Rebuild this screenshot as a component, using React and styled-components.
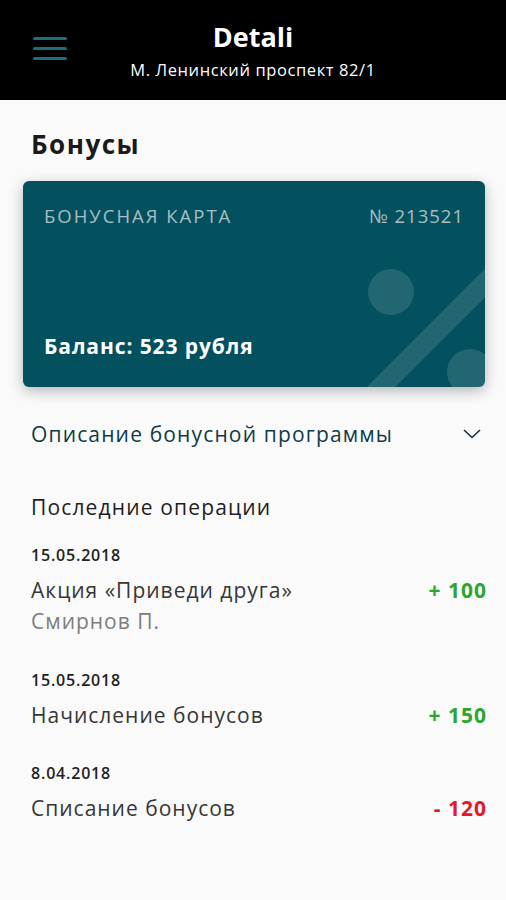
import React from "react";
import styled, { createGlobalStyle } from "styled-components";

const Global = createGlobalStyle`
  html, body { margin: 0; padding: 0; background: #fafafa; }
  body { font-family: "Open Sans", "Liberation Sans", sans-serif; -webkit-font-smoothing: antialiased; }
  * { box-sizing: border-box; }
`;

const Page = styled.div`
  width: 506px;
  min-height: 900px;
  background: #fafafa;
`;

const Header = styled.header`
  height: 100px;
  background: #000;
  display: grid;
  grid-template-columns: 1fr auto 1fr;
  padding-top: 20px;
`;

const Burger = styled.div`
  display: flex;
  flex-direction: column;
  gap: 7px;
  padding: 17px 0 0 33px;
`;

const BurgerLine = styled.span`
  display: block;
  width: 34px;
  height: 3px;
  border-radius: 2px;
  background: #17707a;
`;

const HeaderCenter = styled.div`
  display: flex;
  flex-direction: column;
  align-items: center;
`;

const Title = styled.div`
  color: #fff;
  font-size: 27px;
  font-weight: 700;
  line-height: 34px;
`;

const Subtitle = styled.div`
  color: #fff;
  font-size: 16.5px;
  letter-spacing: 0.6px;
  line-height: 22px;
  margin-top: 5px;
`;

const Main = styled.main`
  padding: 0 21px 0 23px;
`;

const PageTitle = styled.h1`
  margin: 28px 0 0 8px;
  font-size: 26px;
  letter-spacing: 1.5px;
  line-height: 32px;
  font-weight: 700;
  color: #1a1a1a;
`;

const Card = styled.section`
  position: relative;
  overflow: hidden;
  margin-top: 21px;
  height: 206px;
  border-radius: 6px;
  background: #03515e;
  box-shadow: 0 4px 14px rgba(0, 0, 0, 0.28);
  padding: 24px 21px 0 21px;
  display: flex;
  flex-direction: column;
`;

const CardTop = styled.div`
  display: flex;
  justify-content: space-between;
  font-size: 18.5px;
  line-height: 22px;
  color: #a8bfc3;
`;

const CardLabel = styled.span`
  letter-spacing: ${(p) => p.$spacing}px;
`;

const Balance = styled.div`
  margin-top: auto;
  margin-bottom: 28px;
  font-size: 21px;
  letter-spacing: 0.9px;
  line-height: 26px;
  font-weight: 700;
  color: #fff;
  position: relative;
  z-index: 1;
`;

const Deco = styled.svg`
  position: absolute;
  right: 0;
  bottom: 0;
  width: 140px;
  height: 140px;
`;

const Accordion = styled.div`
  margin-top: 23px;
  height: 48px;
  padding: 0 4px 0 8px;
  display: flex;
  align-items: center;
  justify-content: space-between;
  color: #103a48;
  font-size: 21px;
  letter-spacing: 1.15px;
  font-weight: 500;
`;

const SectionTitle = styled.h2`
  margin: 36px 0 0 8px;
  font-size: 21px;
  letter-spacing: 1.15px;
  line-height: 26px;
  font-weight: 500;
  color: #1e1e1e;
`;

const OpList = styled.div`
  margin-top: 24px;
  display: flex;
  flex-direction: column;
  gap: 35px;
  padding-left: 8px;
`;

const Op = styled.div`
  display: flex;
  flex-direction: column;
`;

const OpDate = styled.div`
  font-size: 16px;
  letter-spacing: 0.8px;
  line-height: 22px;
  font-weight: 600;
  color: #222;
`;

const OpRow = styled.div`
  margin-top: 12px;
  display: flex;
  justify-content: space-between;
  align-items: center;
  line-height: 24px;
`;

const OpName = styled.div`
  font-size: 21px;
  letter-spacing: 1px;
  color: #363636;
`;

const Amount = styled.div`
  margin-right: -2px;
  font-size: 21px;
  letter-spacing: 1px;
  font-weight: 700;
  color: ${(p) => (p.$negative ? "#e3192b" : "#2ea52f")};
`;

const OpSub = styled.div`
  margin-top: 6px;
  font-size: 21px;
  letter-spacing: 1px;
  line-height: 26px;
  color: #7d7d7d;
`;

const ops = [
  { date: "15.05.2018", name: "Акция «Приведи друга»", sub: "Смирнов П.", amount: "+ 100" },
  { date: "15.05.2018", name: "Начисление бонусов", amount: "+ 150" },
  { date: "8.04.2018", name: "Списание бонусов", amount: "- 120", negative: true },
];

export default function App() {
  return (
    <Page>
      <Global />
      <Header>
        <Burger>
          <BurgerLine />
          <BurgerLine />
          <BurgerLine />
        </Burger>
        <HeaderCenter>
          <Title>Detali</Title>
          <Subtitle>М. Ленинский проспект 82/1</Subtitle>
        </HeaderCenter>
        <div />
      </Header>
      <Main>
        <PageTitle>Бонусы</PageTitle>
        <Card>
          <Deco viewBox="0 0 140 140">
            <circle cx="46" cy="45" r="23" fill="rgba(255,255,255,0.12)" />
            <circle cx="125" cy="125" r="23" fill="rgba(255,255,255,0.12)" />
            <line x1="20" y1="156" x2="160" y2="16" stroke="rgba(255,255,255,0.12)" strokeWidth="20" />
          </Deco>
          <CardTop>
            <CardLabel $spacing={2}>БОНУСНАЯ КАРТА</CardLabel>
            <CardLabel $spacing={1}>№ 213521</CardLabel>
          </CardTop>
          <Balance>Баланс: 523 рубля</Balance>
        </Card>
        <Accordion>
          <span>Описание бонусной программы</span>
          <svg width="18" height="10" viewBox="0 0 18 10">
            <path d="M1 1 L9 8.5 L17 1" fill="none" stroke="#1e2c3a" strokeWidth="1.6" />
          </svg>
        </Accordion>
        <SectionTitle>Последние операции</SectionTitle>
        <OpList>
          {ops.map((o, i) => (
            <Op key={i}>
              <OpDate>{o.date}</OpDate>
              <OpRow>
                <OpName>{o.name}</OpName>
                <Amount $negative={o.negative}>{o.amount}</Amount>
              </OpRow>
              {o.sub && <OpSub>{o.sub}</OpSub>}
            </Op>
          ))}
        </OpList>
      </Main>
    </Page>
  );
}
